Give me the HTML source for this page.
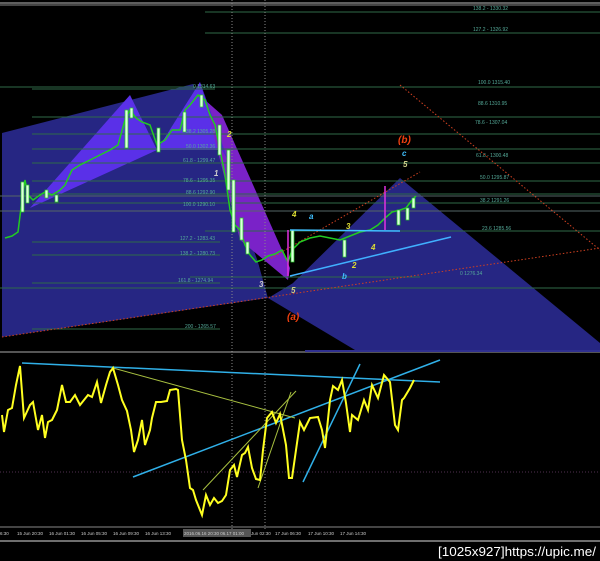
<!DOCTYPE html>
<html><head><style>
html,body{margin:0;padding:0;background:#000;}
svg{display:block;font-family:"Liberation Sans",sans-serif;}
</style></head><body>
<svg width="600" height="561" viewBox="0 0 600 561" xmlns="http://www.w3.org/2000/svg">
<rect width="600" height="561" fill="#000"/>
<line x1="0" y1="3" x2="600" y2="3" stroke="#bbb" stroke-width="1"/>
<line x1="0" y1="5" x2="600" y2="5" stroke="#888" stroke-width="1"/>
<polygon points="2,133 193,84 258,262 268,298 2,337" fill="#262683"/>
<polygon points="400,178 600,343 600,350 355,350 268,298 293,283" fill="#262683"/>
<polygon points="258,262 293,283 268,298" fill="#000"/>
<polygon points="30,208 130,95 157,150" fill="#5a30e8"/>
<polygon points="157,150 200,82 222,150" fill="#5a30e8"/>
<polygon points="205,100 222,115 290,268 288,280 240,240" fill="#7a22c8"/>
<polygon points="222,150 200,82 228,160" fill="#4a2ad0"/>
<g stroke="#2f6a48" stroke-width="1">
<line x1="205" y1="12" x2="600" y2="12"/>
<line x1="205" y1="33" x2="600" y2="33"/>
<line x1="0" y1="87" x2="600" y2="87"/>
<line x1="32" y1="89" x2="215" y2="89"/>
<line x1="32" y1="117" x2="600" y2="117"/>
<line x1="32" y1="134" x2="600" y2="134"/>
<line x1="32" y1="149" x2="600" y2="149"/>
<line x1="32" y1="163" x2="600" y2="163"/>
<line x1="32" y1="181" x2="600" y2="181"/>
<line x1="32" y1="194" x2="600" y2="194"/>
<line x1="0" y1="196" x2="600" y2="196" stroke="#566"/>
<line x1="32" y1="203" x2="600" y2="203"/>
<line x1="0" y1="211" x2="600" y2="211" stroke="#566"/>
<line x1="205" y1="231" x2="600" y2="231"/>
<line x1="32" y1="242" x2="220" y2="242"/>
<line x1="32" y1="255" x2="220" y2="255"/>
<line x1="190" y1="277" x2="420" y2="277"/>
<line x1="32" y1="283" x2="220" y2="283"/>
<line x1="0" y1="288" x2="600" y2="288"/>
<line x1="32" y1="329" x2="220" y2="329"/>
</g>
<g font-size="5" fill="#5a9" >
<text x="473" y="10">138.2 - 1330.32</text>
<text x="473" y="31">127.2 - 1326.92</text>
<text x="478" y="84">100.0 1315.40</text>
<text x="478" y="105">88.6 1310.95</text>
<text x="475" y="124">78.6 - 1307.04</text>
<text x="476" y="157">61.8 - 1300.48</text>
<text x="480" y="179">50.0 1295.87</text>
<text x="480" y="202">38.2 1291.26</text>
<text x="482" y="230">23.6 1285.56</text>
<text x="460" y="275">0 1276.34</text>
<text x="193" y="88">0 1314.63</text>
<text x="186" y="133">38.2 1305.28</text>
<text x="186" y="148">50.0 1302.36</text>
<text x="183" y="162">61.8 - 1299.47</text>
<text x="183" y="182">78.6 - 1295.35</text>
<text x="186" y="194">88.6 1292.90</text>
<text x="183" y="206">100.0 1290.10</text>
<text x="180" y="240">127.2 - 1283.43</text>
<text x="180" y="255">138.2 - 1280.73</text>
<text x="178" y="282">161.8 - 1274.94</text>
<text x="185" y="328">200 - 1265.57</text>
</g>
<line x1="232" y1="0" x2="232" y2="530" stroke="#888" stroke-dasharray="1,2"/>
<line x1="265" y1="0" x2="265" y2="530" stroke="#888" stroke-dasharray="1,2"/>
<g stroke="#d04020" stroke-dasharray="1.5,2" fill="none">
<line x1="2" y1="337" x2="600" y2="248"/>
<line x1="400" y1="85" x2="600" y2="250"/>
<line x1="268" y1="260" x2="420" y2="172"/>
</g>
<polyline fill="none" stroke="#2c2" stroke-width="1.5" points="5,238 12,236 18,232 22,200 25,180 28,195 33,200 40,195 45,192 52,195 60,190 65,185 72,170 80,165 90,160 100,155 110,150 118,145 125,120 130,110 136,118 142,122 150,125 157,145 165,140 172,130 180,130 185,110 190,105 198,95 205,100 210,115 215,125 220,150 225,175 230,210 235,225 240,230 245,245 250,255 256,262 262,260 268,256 275,254 282,250 288,262 292,250 300,242 310,238 320,236 330,238 340,240 350,236 360,232 370,230 378,225 385,218 392,212 400,210 406,208 412,200 416,196"/>
<g fill="#dfd" stroke="#2c2" stroke-width="0.7">
<rect x="21" y="182" width="3" height="30"/><rect x="26" y="185" width="3" height="18"/>
<rect x="45" y="190" width="3" height="8"/><rect x="55" y="195" width="3" height="7"/>
<rect x="125" y="110" width="3" height="38"/><rect x="130" y="108" width="3" height="10"/>
<rect x="157" y="128" width="3" height="24"/><rect x="183" y="112" width="3" height="20"/>
<rect x="200" y="95" width="3" height="12"/><rect x="218" y="125" width="3" height="30"/>
<rect x="227" y="150" width="3" height="40"/><rect x="232" y="180" width="3" height="52"/>
<rect x="240" y="218" width="3" height="22"/><rect x="246" y="242" width="3" height="12"/>
<rect x="291" y="230" width="3" height="32"/><rect x="343" y="240" width="3" height="17"/>
<rect x="397" y="210" width="3" height="15"/><rect x="406" y="208" width="3" height="12"/>
<rect x="412" y="198" width="3" height="10"/>
</g>
<line x1="385" y1="186" x2="385" y2="230" stroke="#e030e0" stroke-width="1.5"/>
<line x1="288" y1="230" x2="288" y2="276" stroke="#e030e0" stroke-width="1.5"/>
<line x1="290" y1="230" x2="400" y2="231" stroke="#40c0ff" stroke-width="1.5"/>
<line x1="290" y1="276" x2="451" y2="237" stroke="#40b0ff" stroke-width="1.5"/>
<g font-size="8" font-style="italic" font-weight="bold">
<text x="259" y="287" fill="#ccc">3</text>
<text x="291" y="293" fill="#cc8">5</text>
<text x="287" y="320" fill="#f04010" font-size="10">(a)</text>
<text x="398" y="143" fill="#f04010" font-size="10">(b)</text>
<text x="402" y="156" fill="#40c0ff">c</text>
<text x="403" y="167" fill="#cc8">5</text>
<text x="309" y="219" fill="#40c0ff">a</text>
<text x="342" y="279" fill="#40c0ff">b</text>
<text x="292" y="217" fill="#dd3">4</text>
<text x="346" y="229" fill="#dd3">3</text>
<text x="352" y="268" fill="#dd3">2</text>
<text x="371" y="250" fill="#dd3">4</text>
<text x="227" y="137" fill="#dd3">2</text>
<text x="214" y="176" fill="#ccc">1</text>
</g>
<line x1="0" y1="352" x2="600" y2="352" stroke="#aaa"/>
<line x1="305" y1="351" x2="600" y2="351" stroke="#303090" stroke-width="2"/>
<line x1="0" y1="472" x2="600" y2="472" stroke="#503050" stroke-dasharray="1,2"/>
<g stroke="#30b0e8" stroke-width="1.5">
<line x1="22" y1="363" x2="440" y2="382"/>
<line x1="133" y1="477" x2="440" y2="360"/>
<line x1="303" y1="482" x2="360" y2="364"/>
</g>
<g stroke="#a8c040" stroke-width="1">
<line x1="113" y1="368" x2="295" y2="418"/>
<line x1="203" y1="490" x2="296" y2="391"/>
<line x1="258" y1="488" x2="291" y2="392"/>
</g>
<polyline fill="none" stroke="#ffff20" stroke-width="2" points="2,415 4,432 8,410 12,408 16,385 20,366 24,418 30,405 33,402 38,430 42,415 45,438 48,422 52,420 57,410 62,385 66,402 70,402 75,395 80,405 84,400 88,395 92,397 97,382 101,403 106,385 110,372 113,368 118,385 122,400 127,411 131,430 134,452 138,440 142,420 145,445 150,430 152,418 156,402 161,402 167,401 170,390 176,389 178,390 182,440 186,460 190,488 193,490 196,500 202,515 206,495 210,505 214,498 218,503 222,501 226,495 230,470 234,465 237,477 242,455 245,453 248,447 252,468 256,479 260,480 263,450 267,418 272,412 276,423 280,414 286,445 289,478 292,478 300,422 304,430 310,418 318,417 322,430 325,448 330,400 333,386 338,390 342,380 346,403 350,432 352,415 358,420 364,400 368,410 372,385 378,398 384,375 390,382 395,425 398,430 402,400 404,398 410,388 414,380"/>
<line x1="0" y1="527" x2="600" y2="527" stroke="#888"/>
<rect x="183" y="529" width="68" height="8" fill="#555"/>
<g font-size="4.5" fill="#ccc">
<text x="0" y="535">6:30</text><text x="17" y="535">15 Jun 20:30</text><text x="49" y="535">16 Jun 01:30</text>
<text x="81" y="535">16 Jun 05:30</text><text x="113" y="535">16 Jun 09:30</text><text x="145" y="535">16 Jun 13:30</text>
<text x="184" y="535">2016.06.16 20:30 06.17 01:00</text><text x="251" y="535">Jun 02:30</text>
<text x="275" y="535">17 Jun 06:30</text><text x="308" y="535">17 Jun 10:30</text><text x="340" y="535">17 Jun 14:30</text>
</g>
<line x1="0" y1="541" x2="600" y2="541" stroke="#ddd"/>
<text x="596" y="556" text-anchor="end" font-size="13" fill="#fff" textLength="158" lengthAdjust="spacingAndGlyphs">[1025x927]https://upic.me/</text>
</svg>
</body></html>
